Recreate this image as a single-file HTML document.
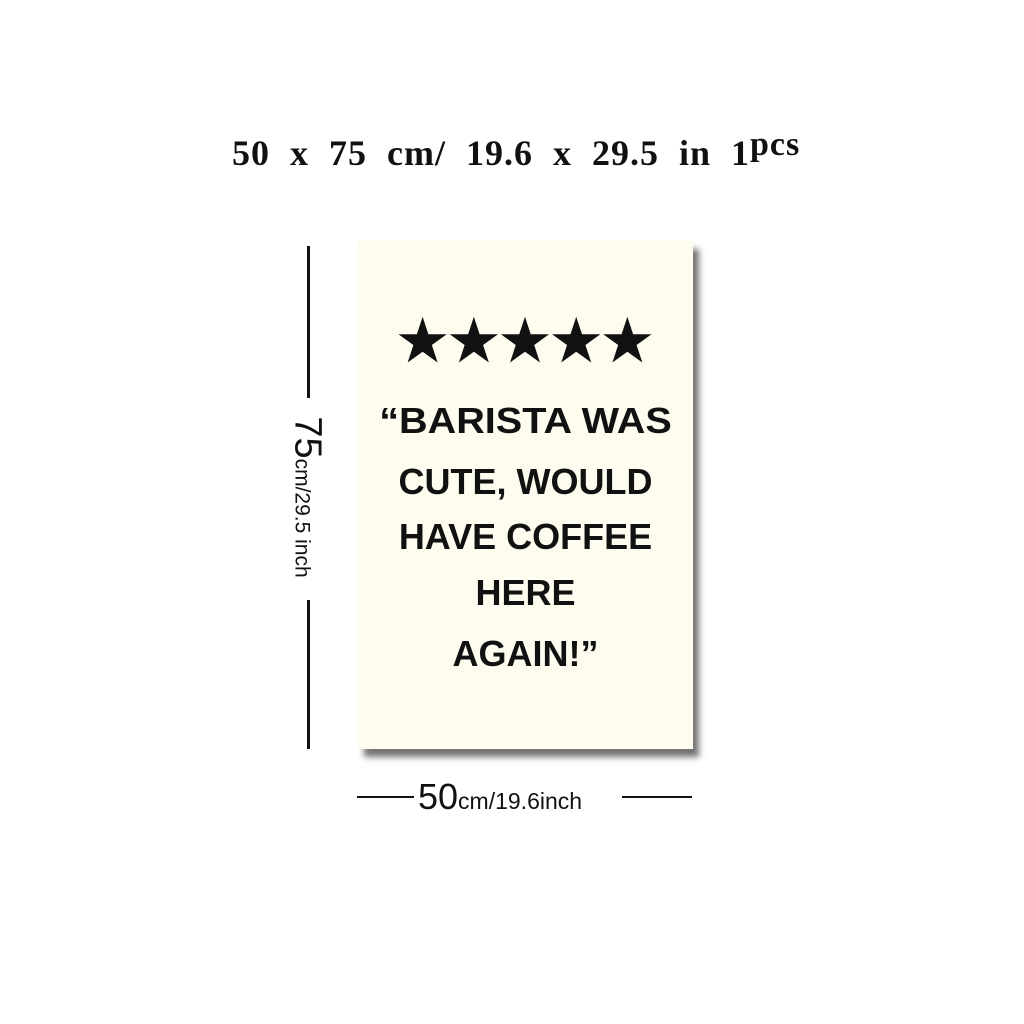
<!DOCTYPE html>
<html><head><style>
body{margin:0;width:1024px;height:1024px;background:#fff;position:relative;overflow:hidden;font-family:"Liberation Sans",sans-serif;}
.title{position:absolute;left:232px;top:126px;font-family:"Liberation Serif",serif;font-size:36px;color:#111;white-space:nowrap;letter-spacing:1px;word-spacing:10px;font-weight:bold;}
.title sup{font-size:34px;vertical-align:10px;}
.poster{position:absolute;left:358px;top:241px;width:335px;height:508px;background:#fdfcef;box-shadow:6px 8px 6px rgba(0,0,0,.55);}
.q{position:absolute;left:358px;width:335px;text-align:center;color:#111;font-weight:bold;font-size:36px;white-space:nowrap;transform-origin:center;}
.vl{position:absolute;left:307px;width:3px;background:#111;}
.hl{position:absolute;top:796px;height:2px;background:#111;}
.vt{position:absolute;left:307px;top:497px;transform:translate(-50%,-50%) rotate(90deg);white-space:nowrap;font-size:21px;color:#111;}
</style></head><body>
<div class="title">50 x 75 cm/ 19.6 x 29.5 in 1<sup>pcs</sup></div>
<div class="poster"></div>
<div class="q" style="top:308px;font-size:56px;letter-spacing:1px">★★★★★</div>
<div class="q" style="top:400px;transform:scaleX(1.1)">“BARISTA WAS</div>
<div class="q" style="top:461px;">CUTE, WOULD</div>
<div class="q" style="top:516px;">HAVE COFFEE</div>
<div class="q" style="top:572px;">HERE</div>
<div class="q" style="top:633px;">AGAIN!”</div>
<div class="vl" style="top:246px;height:152px"></div>
<div class="vl" style="top:600px;height:149px"></div>
<div class="vt"><span style="font-size:38px">75</span>cm/29.5 inch</div>
<div class="hl" style="left:357px;width:57px"></div>
<div class="hl" style="left:622px;width:70px"></div>
<div style="position:absolute;left:418px;top:776px;font-size:23px;color:#111;white-space:nowrap"><span style="font-size:36px">50</span>cm/19.6inch</div>
</body></html>
